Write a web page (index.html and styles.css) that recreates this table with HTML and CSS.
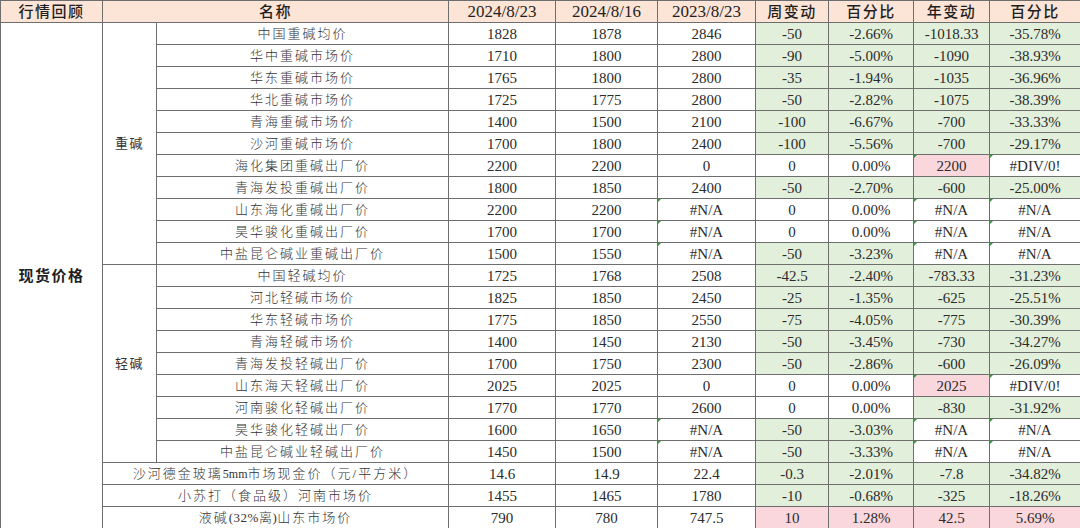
FILE: index.html
```html
<!DOCTYPE html>
<html lang="zh-CN">
<head>
<meta charset="utf-8">
<title>行情回顾</title>
<link rel="stylesheet" href="styles.css">
</head>
<body>
<table class="sheet">
<colgroup>
<col class="c1"><col class="c2"><col class="c3"><col class="c4"><col class="c5"><col class="c6"><col class="c7"><col class="c8"><col class="c9"><col class="c10">
</colgroup>
<thead>
<tr class="head">
<th class="cj">行情回顾</th>
<th class="cj" colspan="2">名称</th>
<th>2024/8/23</th>
<th>2024/8/16</th>
<th>2023/8/23</th>
<th class="cj">周变动</th>
<th class="cj">百分比</th>
<th class="cj">年变动</th>
<th class="cj">百分比</th>
</tr>
</thead>
<tbody>
<tr>
<td class="big" rowspan="23">现货价格</td>
<td class="grp" rowspan="11">重碱</td>
<td class="name">中国重碱均价</td><td>1828</td><td>1878</td><td>2846</td>
<td class="g">-50</td><td class="g">-2.66%</td><td class="g">-1018.33</td><td class="g">-35.78%</td>
</tr>
<tr><td class="name">华中重碱市场价</td><td>1710</td><td>1800</td><td>2800</td>
<td class="g">-90</td><td class="g">-5.00%</td><td class="g">-1090</td><td class="g">-38.93%</td></tr>
<tr><td class="name">华东重碱市场价</td><td>1765</td><td>1800</td><td>2800</td>
<td class="g">-35</td><td class="g">-1.94%</td><td class="g">-1035</td><td class="g">-36.96%</td></tr>
<tr><td class="name">华北重碱市场价</td><td>1725</td><td>1775</td><td>2800</td>
<td class="g">-50</td><td class="g">-2.82%</td><td class="g">-1075</td><td class="g">-38.39%</td></tr>
<tr><td class="name">青海重碱市场价</td><td>1400</td><td>1500</td><td>2100</td>
<td class="g">-100</td><td class="g">-6.67%</td><td class="g">-700</td><td class="g">-33.33%</td></tr>
<tr><td class="name">沙河重碱市场价</td><td>1700</td><td>1800</td><td>2400</td>
<td class="g">-100</td><td class="g">-5.56%</td><td class="g">-700</td><td class="g">-29.17%</td></tr>
<tr><td class="name">海化集团重碱出厂价</td><td>2200</td><td>2200</td><td>0</td>
<td>0</td><td>0.00%</td><td class="p err">2200</td><td class="err">#DIV/0!</td></tr>
<tr><td class="name">青海发投重碱出厂价</td><td>1800</td><td>1850</td><td>2400</td>
<td class="g">-50</td><td class="g">-2.70%</td><td class="g">-600</td><td class="g">-25.00%</td></tr>
<tr><td class="name">山东海化重碱出厂价</td><td>2200</td><td>2200</td><td class="err">#N/A</td>
<td>0</td><td>0.00%</td><td class="err">#N/A</td><td class="err">#N/A</td></tr>
<tr><td class="name">昊华骏化重碱出厂价</td><td>1700</td><td>1700</td><td class="err">#N/A</td>
<td>0</td><td>0.00%</td><td class="err">#N/A</td><td class="err">#N/A</td></tr>
<tr><td class="name">中盐昆仑碱业重碱出厂价</td><td>1500</td><td>1550</td><td class="err">#N/A</td>
<td class="g">-50</td><td class="g">-3.23%</td><td class="err">#N/A</td><td class="err">#N/A</td></tr>
<tr>
<td class="grp" rowspan="9">轻碱</td>
<td class="name">中国轻碱均价</td><td>1725</td><td>1768</td><td>2508</td>
<td class="g">-42.5</td><td class="g">-2.40%</td><td class="g">-783.33</td><td class="g">-31.23%</td>
</tr>
<tr><td class="name">河北轻碱市场价</td><td>1825</td><td>1850</td><td>2450</td>
<td class="g">-25</td><td class="g">-1.35%</td><td class="g">-625</td><td class="g">-25.51%</td></tr>
<tr><td class="name">华东轻碱市场价</td><td>1775</td><td>1850</td><td>2550</td>
<td class="g">-75</td><td class="g">-4.05%</td><td class="g">-775</td><td class="g">-30.39%</td></tr>
<tr><td class="name">青海轻碱市场价</td><td>1400</td><td>1450</td><td>2130</td>
<td class="g">-50</td><td class="g">-3.45%</td><td class="g">-730</td><td class="g">-34.27%</td></tr>
<tr><td class="name">青海发投轻碱出厂价</td><td>1700</td><td>1750</td><td>2300</td>
<td class="g">-50</td><td class="g">-2.86%</td><td class="g">-600</td><td class="g">-26.09%</td></tr>
<tr><td class="name">山东海天轻碱出厂价</td><td>2025</td><td>2025</td><td>0</td>
<td>0</td><td>0.00%</td><td class="p err">2025</td><td class="err">#DIV/0!</td></tr>
<tr><td class="name">河南骏化轻碱出厂价</td><td>1770</td><td>1770</td><td>2600</td>
<td>0</td><td>0.00%</td><td class="g">-830</td><td class="g">-31.92%</td></tr>
<tr><td class="name">昊华骏化轻碱出厂价</td><td>1600</td><td>1650</td><td class="err">#N/A</td>
<td class="g">-50</td><td class="g">-3.03%</td><td class="err">#N/A</td><td class="err">#N/A</td></tr>
<tr><td class="name">中盐昆仑碱业轻碱出厂价</td><td>1450</td><td>1500</td><td class="err">#N/A</td>
<td class="g">-50</td><td class="g">-3.33%</td><td class="err">#N/A</td><td class="err">#N/A</td></tr>
<tr><td class="name" colspan="2">沙河德金玻璃<span class="mm">5mm</span>市场现金价（元/平方米）</td><td>14.6</td><td>14.9</td><td>22.4</td>
<td class="g">-0.3</td><td class="g">-2.01%</td><td class="g">-7.8</td><td class="g">-34.82%</td></tr>
<tr><td class="name" colspan="2">小苏打（食品级）河南市场价</td><td>1455</td><td>1465</td><td>1780</td>
<td class="g">-10</td><td class="g">-0.68%</td><td class="g">-325</td><td class="g">-18.26%</td></tr>
<tr><td class="name" colspan="2">液碱<span class="lat">(32%离)</span>山东市场价</td><td>790</td><td>780</td><td>747.5</td>
<td class="p">10</td><td class="p">1.28%</td><td class="p">42.5</td><td class="p">5.69%</td></tr>
</tbody>
</table>
</body>
</html>
```

FILE: styles.css
```css
html, body {
  margin: 0;
  padding: 0;
  background: #ffffff;
}

.sheet {
  border-collapse: collapse;
  table-layout: fixed;
  width: 1080px;
  font-family: "Liberation Serif", "Noto Sans CJK SC", serif;
  font-size: 15px;
  color: #2b2b2b;
}

.c1 { width: 102px; }
.c2 { width: 54px; }
.c3 { width: 292px; }
.c4 { width: 107px; }
.c5 { width: 102px; }
.c6 { width: 98px; }
.c7 { width: 73px; }
.c8 { width: 85px; }
.c9 { width: 76px; }
.c10 { width: 91px; }

.sheet tr {
  height: 22px;
}

.sheet th,
.sheet td {
  border: 1px solid #6e6e6e;
  padding: 0;
  text-align: center;
  vertical-align: middle;
  white-space: nowrap;
  overflow: hidden;
  line-height: 20px;
}

.head th {
  background: #fce4d6;
  font-weight: normal;
  font-size: 17px;
  color: #1f1f1f;
}

.head th.cj {
  font-size: 15px;
  letter-spacing: 1.5px;
  font-weight: 500;
}

.sheet td.name {
  font-size: 13px;
  letter-spacing: 2px;
  color: #333333;
  font-weight: 300;
}

.mm {
  letter-spacing: 0;
  font-size: 12px;
}

.lat {
  letter-spacing: 0.5px;
}

.sheet td.grp {
  font-size: 13px;
  letter-spacing: 1.5px;
  color: #333333;
}

.sheet td.big {
  font-size: 15px;
  letter-spacing: 1.5px;
  font-weight: bold;
  color: #1f1f1f;
}

.sheet td.g {
  background: #e2efda;
}

.sheet td.p {
  background: #f9d7dc;
}

.sheet td.err {
  position: relative;
}

.sheet td.err::before {
  content: "";
  position: absolute;
  left: 0;
  top: 0;
  border-top: 3px solid #2e9a3a;
  border-right: 3px solid transparent;
}
```
